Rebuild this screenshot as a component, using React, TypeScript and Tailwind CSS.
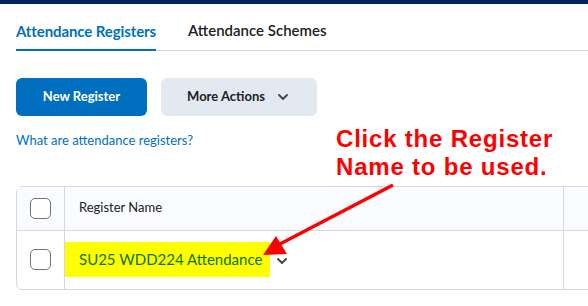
import { ChevronDown } from "lucide-react";

const Checkbox = () => (
  <div className="h-[21px] w-[21px] rounded-[5px] border-[1.5px] border-[#6e7477] bg-white" />
);

export default function App() {
  return (
    <div
      className="relative h-[306px] w-[588px] overflow-hidden bg-white text-[#202122]"
      style={{ fontFamily: "Lato, 'Noto Sans', sans-serif" }}
    >
      <div className="h-[4px] bg-[#032459]" />

      {/* Tabs */}
      <div className="ml-4 flex h-[47px] items-end border-b border-[#cdd5dc]">
        <div className="mb-[-1px] border-b-2 border-[#006fbf] pb-[7px] text-[15px] font-bold tracking-[-0.1px] text-[#006fbf]">
          Attendance Registers
        </div>
        <div className="ml-8 pb-[9px] text-[15px] font-semibold text-[#202122]">
          Attendance Schemes
        </div>
      </div>

      {/* Actions */}
      <div className="ml-4 mt-[27px] flex gap-[14px]">
        <button className="h-[38px] w-[131px] rounded-md bg-[#006fbf] text-[13px] font-bold text-white">
          New Register
        </button>
        <button className="flex h-[38px] w-[156px] items-center justify-center gap-[10px] rounded-md bg-[#e3e9f1] text-[13px] font-bold text-[#202122]">
          More Actions
          <ChevronDown size={16} strokeWidth={3} className="text-[#494c4e]" />
        </button>
      </div>

      <div className="ml-4 mt-[15px] text-[13px] text-[#006fbf]">What are attendance registers?</div>

      {/* Table */}
      <div className="ml-4 mt-[35px] w-[640px] rounded-l-md border border-[#d3d9e3]">
        <div className="flex h-[43px] bg-[#f9fbff]">
          <div className="flex w-[48px] items-center justify-center border-r border-[#d3d9e3]">
            <Checkbox />
          </div>
          <div className="flex w-[499px] items-center border-r border-[#d3d9e3] pl-[14px] text-[13px] text-[#202122]">
            Register Name
          </div>
          <div className="flex-1" />
        </div>
        <div className="flex h-[59px] border-t border-[#d3d9e3]">
          <div className="flex w-[48px] items-center justify-center border-r border-[#d3d9e3]">
            <Checkbox />
          </div>
          <div className="flex w-[499px] items-center border-r border-[#d3d9e3]">
            <div className="flex h-[35px] items-center bg-[#ffff00] pl-[14px] pr-[8px] text-[15px] text-[#0a7300]">
              SU25 WDD224 Attendance
            </div>
            <ChevronDown size={16} strokeWidth={3} className="ml-[4px] mt-[2px] text-[#494c4e]" />
          </div>
          <div className="flex-1" />
        </div>
      </div>

      {/* Annotation */}
      <div
        className="absolute left-[336px] top-[125px] text-[24px] font-bold leading-[28px] tracking-[0.8px] text-[#ff0000]"
        style={{ fontFamily: "'Liberation Sans', Arial, sans-serif" }}
      >
        Click the Register
        <br />
        Name to be used.
      </div>
      <svg className="absolute left-0 top-0" width="588" height="306" viewBox="0 0 588 306">
        <line x1="393" y1="185" x2="280" y2="244" stroke="#ff0000" strokeWidth="3.5" />
        <polygon points="263,255 276,236 287,254" fill="#ff0000" />
      </svg>
    </div>
  );
}
